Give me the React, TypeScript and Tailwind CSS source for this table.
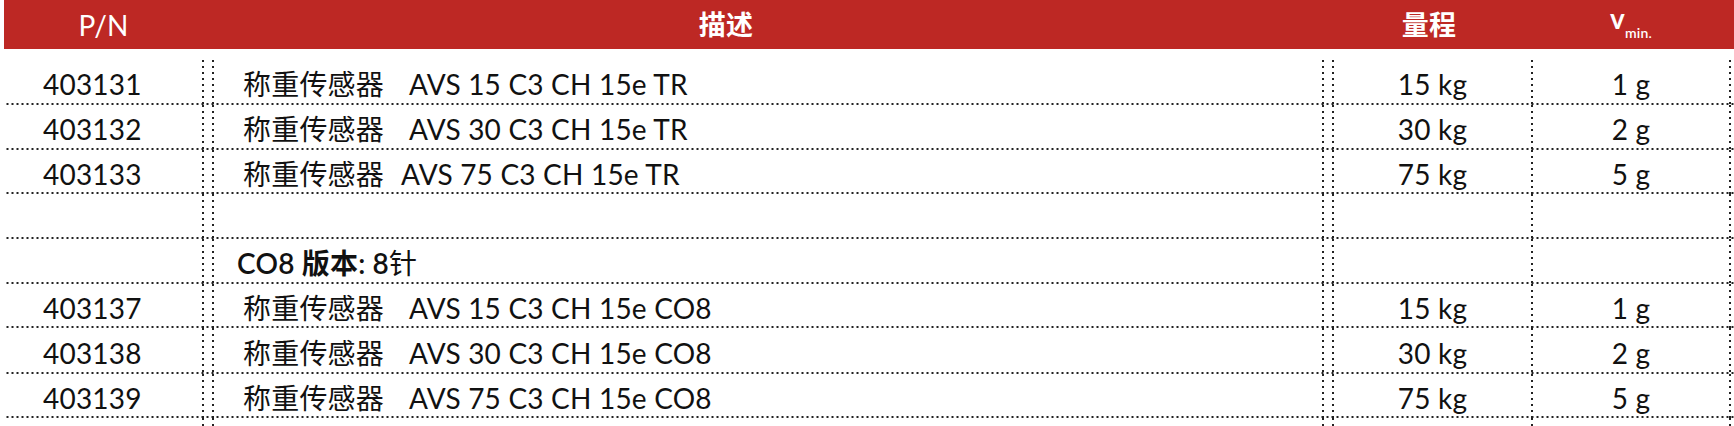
const rows = [
  { pn: "403131", name: "AVS 15 C3 CH 15e TR", gap: "ml-[25px]", range: "15 kg", vmin: "1 g", h: "h-[45px]" },
  { pn: "403132", name: "AVS 30 C3 CH 15e TR", gap: "ml-[25px]", range: "30 kg", vmin: "2 g", h: "h-[45px]" },
  { pn: "403133", name: "AVS 75 C3 CH 15e TR", gap: "ml-[17px]", range: "75 kg", vmin: "5 g", h: "h-[44px]" },
];

const co8Rows = [
  { pn: "403137", name: "AVS 15 C3 CH 15e CO8", range: "15 kg", vmin: "1 g", h: "h-[44px]" },
  { pn: "403138", name: "AVS 30 C3 CH 15e CO8", range: "30 kg", vmin: "2 g", h: "h-[46px]" },
  { pn: "403139", name: "AVS 75 C3 CH 15e CO8", range: "75 kg", vmin: "5 g", h: "h-[44px]" },
];

function VLine() {
  return (
    <div className="w-[2px] shrink-0 self-stretch bg-[linear-gradient(to_bottom,#222_2px,transparent_2px)] bg-[length:2px_6px] bg-repeat-y" />
  );
}

function Row({ h, children }: { h: string; children?: [React.ReactNode, React.ReactNode, React.ReactNode, React.ReactNode] }) {
  const [pn, desc, range, vmin] = children ?? [null, null, null, null];
  return (
    <div
      className={`flex ${h} bg-[linear-gradient(to_right,#222_2px,transparent_2px)] bg-[length:5px_2px] bg-bottom bg-repeat-x`}
    >
      <div className="flex w-[198px] shrink-0 items-center pl-[39px] pt-[3px]">{pn}</div>
      <VLine />
      <div className="w-[8px] shrink-0" />
      <VLine />
      <div className="flex w-[1108px] shrink-0 items-center pt-[3px]">{desc}</div>
      <VLine />
      <div className="w-[8px] shrink-0" />
      <VLine />
      <div className="flex w-[197px] shrink-0 items-center justify-center pt-[3px]">{range}</div>
      <VLine />
      <div className="flex w-[196px] shrink-0 items-center justify-center pt-[3px]">{vmin}</div>
      <VLine />
    </div>
  );
}

export default function App() {
  return (
    <div className="h-[426px] w-[1734px] overflow-hidden bg-white font-['Lato','Noto_Sans_CJK_SC',sans-serif] text-[28px] leading-none tracking-[0.2px] text-[#111]">
      {/* Header bar */}
      <div className="ml-[4px] flex h-[49px] items-center bg-[#bd2824] text-white">
        <div className="flex w-[199px] justify-center">P/N</div>
        <div className="flex w-[1046px] justify-center font-bold text-[27px]">描述</div>
        <div className="w-[77px]" />
        <div className="flex w-[206px] justify-center font-bold text-[27px]">量程</div>
        <div className="flex w-[198px] items-baseline justify-center">
          <span className="relative -top-[7px] font-bold">v</span>
          <span className="relative top-[2px] text-[14px] font-semibold">min.</span>
        </div>
      </div>

      {/* Table body */}
      <div className="ml-[4px] mt-[11px]">
        {rows.map((r) => (
          <Row key={r.pn} h={r.h}>
            {r.pn}
            <span className="pl-[29px]">
              称重传感器<span className={r.gap}>{r.name}</span>
            </span>
            {r.range}
            {r.vmin}
          </Row>
        ))}
        <Row h="h-[45px]" />
        <Row h="h-[45px]">
          {null}
          <span className="pl-[23px]">
            <span className="font-semibold">CO8 版本: 8</span>针
          </span>
          {null}
          {null}
        </Row>
        {co8Rows.map((r) => (
          <Row key={r.pn} h={r.h}>
            {r.pn}
            <span className="pl-[29px]">
              称重传感器<span className="ml-[25px]">{r.name}</span>
            </span>
            {r.range}
            {r.vmin}
          </Row>
        ))}
        <Row h="h-[45px]" />
      </div>
    </div>
  );
}
